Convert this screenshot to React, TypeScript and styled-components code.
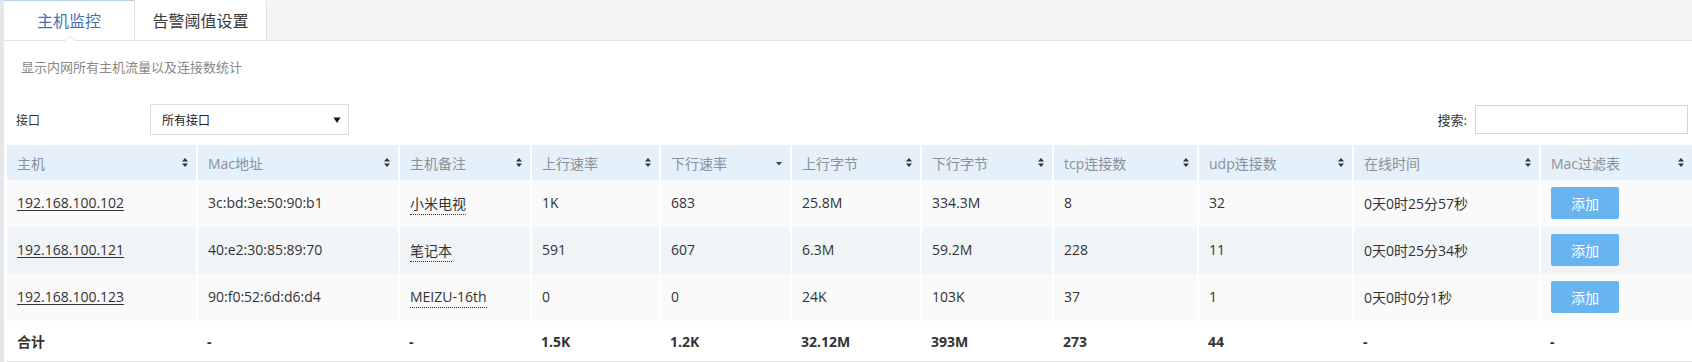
import styled, { createGlobalStyle } from "styled-components";

const GlobalStyle = createGlobalStyle`
  html, body {
    margin: 0;
    padding: 0;
    background: #e4e6e9;
  }
  body {
    font-family: "Open Sans", "Noto Sans CJK SC", sans-serif;
    color: #333;
  }
`;

const Page = styled.div`
  display: flex;
  min-height: 362px;
  padding-left: 4px;
  background: #e4e6e9;
`;

const Panel = styled.div`
  flex: 1;
  min-width: 0;
  background: #fff;
`;

const TabBar = styled.div`
  display: flex;
  height: 40px;
  background: #f4f5f7;
  border-bottom: 1px solid #e1e3e6;
`;

const Tab = styled.div<{ $active?: boolean }>`
  position: relative;
  box-sizing: border-box;
  width: ${(p) => (p.$active ? "131px" : "132px")};
  height: 41px;
  display: flex;
  align-items: center;
  justify-content: center;
  background: #fff;
  border-right: 1px solid #e1e3e6;
  border-top: 1px solid ${(p) => (p.$active ? "#b8cfea" : "transparent")};
  border-bottom: 1px solid #e1e3e6;
  font-size: 16px;
  color: ${(p) => (p.$active ? "#4a6fb0" : "#3a3a3a")};
  padding-bottom: 2px;

  ${(p) =>
    p.$active &&
    `
    &::before {
      content: "";
      position: absolute;
      left: 60px;
      bottom: -1px;
      border-left: 6px solid transparent;
      border-right: 6px solid transparent;
      border-bottom: 5px solid #dfe2e6;
    }
    &::after {
      content: "";
      position: absolute;
      left: 61px;
      bottom: -1px;
      border-left: 5px solid transparent;
      border-right: 5px solid transparent;
      border-bottom: 4px solid #fff;
    }
  `}
`;

const Body = styled.div`
  padding-left: 3px;
`;

const Description = styled.p`
  margin: 16px 0 0 14px;
  font-size: 13px;
  line-height: 20px;
  color: #888;
`;

const Controls = styled.div`
  display: flex;
  align-items: center;
  justify-content: space-between;
  margin-top: 27px;
  height: 31px;
  padding-right: 4px;
`;

const FilterGroup = styled.div`
  display: flex;
  align-items: center;
`;

const Label = styled.span<{ $width?: number }>`
  font-size: 12px;
  color: #333;
  ${(p) => (p.$width ? `width: ${p.$width}px;` : "")}
`;

const InterfaceLabel = styled(Label)`
  margin-left: 9px;
`;

const Select = styled.div`
  box-sizing: border-box;
  width: 199px;
  height: 31px;
  display: flex;
  align-items: center;
  justify-content: space-between;
  padding: 0 7px 0 11px;
  border: 1px solid #dcdcdc;
  font-size: 12px;
  color: #222;
`;

const SearchLabel = styled.span`
  font-size: 13px;
  color: #333;
  margin-right: 8px;
`;

const SearchInput = styled.input`
  box-sizing: border-box;
  width: 213px;
  height: 29px;
  border: 1px solid #d5d5d5;
  outline: none;
  padding: 0 6px;
`;

const Table = styled.table`
  margin-top: 10px;
  width: 1685px;
  table-layout: fixed;
  border-collapse: collapse;
  font-size: 14px;
`;

const Th = styled.th`
  height: 35px;
  padding: 0;
  background: #e4f0fa;
  border-right: 2px solid #fff;
  font-weight: normal;
  text-align: left;
  color: #8a9199;

  &:last-child {
    border-right: none;
  }
`;

const HeadInner = styled.div`
  display: flex;
  align-items: center;
  justify-content: space-between;
  padding: 0 7px 0 10px;
`;

const Tr = styled.tr<{ $bg: string }>`
  background: ${(p) => p.$bg};
`;

const Td = styled.td`
  height: 45px;
  padding: 0 0 2px 10px;
  border-right: 2px solid #fff;
  color: #333;
  white-space: nowrap;

  &:last-child {
    border-right: none;
  }
`;

const FootTd = styled.td`
  height: 40px;
  padding: 0 0 0 10px;
  font-weight: bold;
  color: #333;
  border-bottom: 1px solid #e6e8ea;
`;

const HostLink = styled.a`
  color: #333;
  text-decoration: underline;
  text-underline-offset: 2px;
`;

const Note = styled.span`
  border-bottom: 1px dotted #333;
  padding-bottom: 1px;
`;

const AddButton = styled.button`
  width: 68px;
  height: 32px;
  border: none;
  border-radius: 2px;
  background: #67b4ef;
  color: #fff;
  font-family: inherit;
  font-size: 14px;
  cursor: pointer;
`;

function SortIcon({ desc }: { desc?: boolean }) {
  if (desc) {
    return (
      <svg width="8" height="10" viewBox="0 0 8 10">
        <path d="M1 4 L7 4 L4 7.5 Z" fill="#444" />
      </svg>
    );
  }
  return (
    <svg width="8" height="11" viewBox="0 0 8 11">
      <path d="M1 4.6 L7 4.6 L4 1 Z" fill="#333" />
      <path d="M1 6.4 L7 6.4 L4 10 Z" fill="#333" />
    </svg>
  );
}

function SelectCaret() {
  return (
    <svg width="8" height="8" viewBox="0 0 8 8">
      <path d="M0.5 1.5 L7.5 1.5 L4 7 Z" fill="#111" />
    </svg>
  );
}

const columns = [
  { title: "主机", width: 190 },
  { title: "Mac地址", width: 202 },
  { title: "主机备注", width: 132 },
  { title: "上行速率", width: 129 },
  { title: "下行速率", width: 131, desc: true },
  { title: "上行字节", width: 130 },
  { title: "下行字节", width: 132 },
  { title: "tcp连接数", width: 145 },
  { title: "udp连接数", width: 155 },
  { title: "在线时间", width: 187 },
  { title: "Mac过滤表", width: 152 },
];

const hosts = [
  {
    ip: "192.168.100.102",
    mac: "3c:bd:3e:50:90:b1",
    note: "小米电视",
    up: "1K",
    down: "683",
    upBytes: "25.8M",
    downBytes: "334.3M",
    tcp: "8",
    udp: "32",
    online: "0天0时25分57秒",
  },
  {
    ip: "192.168.100.121",
    mac: "40:e2:30:85:89:70",
    note: "笔记本",
    up: "591",
    down: "607",
    upBytes: "6.3M",
    downBytes: "59.2M",
    tcp: "228",
    udp: "11",
    online: "0天0时25分34秒",
  },
  {
    ip: "192.168.100.123",
    mac: "90:f0:52:6d:d6:d4",
    note: "MEIZU-16th",
    up: "0",
    down: "0",
    upBytes: "24K",
    downBytes: "103K",
    tcp: "37",
    udp: "1",
    online: "0天0时0分1秒",
  },
];

const totals = ["合计", "-", "-", "1.5K", "1.2K", "32.12M", "393M", "273", "44", "-", "-"];

const rowColors = ["#fafafa", "#f1f4f7", "#fafafa"];

export default function App() {
  return (
    <>
      <GlobalStyle />
      <Page>
        <Panel>
          <TabBar>
            <Tab $active>主机监控</Tab>
            <Tab>告警阈值设置</Tab>
          </TabBar>
          <Body>
            <Description>显示内网所有主机流量以及连接数统计</Description>
            <Controls>
              <FilterGroup>
                <InterfaceLabel $width={134}>接口</InterfaceLabel>
                <Select>
                  所有接口
                  <SelectCaret />
                </Select>
              </FilterGroup>
              <FilterGroup>
                <SearchLabel>搜索:</SearchLabel>
                <SearchInput type="text" />
              </FilterGroup>
            </Controls>
            <Table>
              <colgroup>
                {columns.map((c) => (
                  <col key={c.title} style={{ width: c.width }} />
                ))}
              </colgroup>
              <thead>
                <tr>
                  {columns.map((c) => (
                    <Th key={c.title}>
                      <HeadInner>
                        <span>{c.title}</span>
                        <SortIcon desc={c.desc} />
                      </HeadInner>
                    </Th>
                  ))}
                </tr>
              </thead>
              <tbody>
                {hosts.map((h, i) => (
                  <Tr key={h.ip} $bg={rowColors[i]}>
                    <Td>
                      <HostLink href="#">{h.ip}</HostLink>
                    </Td>
                    <Td>{h.mac}</Td>
                    <Td>
                      <Note>{h.note}</Note>
                    </Td>
                    <Td>{h.up}</Td>
                    <Td>{h.down}</Td>
                    <Td>{h.upBytes}</Td>
                    <Td>{h.downBytes}</Td>
                    <Td>{h.tcp}</Td>
                    <Td>{h.udp}</Td>
                    <Td>{h.online}</Td>
                    <Td>
                      <AddButton>添加</AddButton>
                    </Td>
                  </Tr>
                ))}
                <Tr $bg="#fff">
                  {totals.map((t, i) => (
                    <FootTd key={i}>{t}</FootTd>
                  ))}
                </Tr>
              </tbody>
            </Table>
          </Body>
        </Panel>
      </Page>
    </>
  );
}
